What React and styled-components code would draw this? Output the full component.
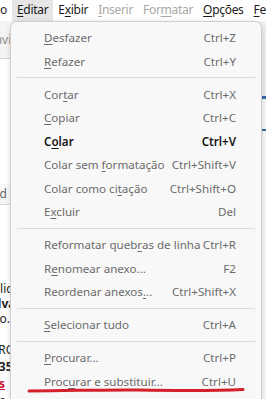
import React from 'react';
import styled, {createGlobalStyle} from 'styled-components';

const Global = createGlobalStyle`
  html, body { margin: 0; padding: 0; background: #fff; }
  body { width: 266px; height: 399px; overflow: hidden; font-family: "Noto Sans", "Open Sans", sans-serif; }
`;

const Screen = styled.div`
  position: relative;
  width: 266px;
  height: 399px;
  overflow: hidden;
  background: #fff;
`;

const MenuBar = styled.div`
  display: flex;
  align-items: center;
  height: 21px;
  background: #fff;
  font-size: 12px;
  letter-spacing: -0.3px;
  color: #1b1b1b;
  white-space: nowrap;
  margin-left: -5px;
  overflow: hidden;
`;

const BarItem = styled.div`
  flex: none;
  padding: 0 5px;
  height: 21px;
  line-height: 20px;
  color: ${p => (p.disabled ? '#a8a8a8' : '#1b1b1b')};
  background: ${p => (p.active ? '#e6e6e6' : 'transparent')};
`;

const Key = styled.span`
  text-decoration: underline;
  text-underline-offset: 2px;
  text-decoration-thickness: 1px;
`;

const Toolbar = styled.div`
  height: 37px;
  background: #f4f4f4;
  border-bottom: 1px solid #d4d4d4;
  display: flex;
  align-items: center;
  font-size: 12px;
  color: #8a8a8a;
  margin-left: -12px;
`;

const Doc = styled.div`
  display: flex;
  flex-direction: column;
  font-size: 12px;
  color: #222;
  white-space: nowrap;
`;

const DocLine = styled.div`
  height: ${p => p.h || 16}px;
  line-height: ${p => p.h || 16}px;
  margin-left: ${p => p.shift || 0}px;
  font-weight: ${p => (p.bold ? 700 : 400)};
  color: ${p => p.color || '#222'};
  text-decoration: ${p => (p.under ? 'underline' : 'none')};
  border-bottom: ${p => (p.rule ? '1px solid #d8d8d8' : 'none')};
  background: ${p => p.bg || 'transparent'};
  overflow: hidden;
`;

const Panel = styled.div`
  position: absolute;
  left: 10px;
  top: 21px;
  width: 252px;
  height: 400px;
  box-sizing: border-box;
  background: #f8f8f8;
  border: 1px solid #cfcfcf;
  border-top-left-radius: 7px;
  border-top-right-radius: 7px;
  box-shadow: 1px 2px 6px rgba(0, 0, 0, 0.18);
  padding-top: 4px;
  display: flex;
  flex-direction: column;
  font-size: 11.6px;
`;

const Row = styled.div`
  height: 23.5px;
  display: flex;
  align-items: center;
  justify-content: space-between;
  padding: 0 25px 0 33px;
  color: ${p => (p.strong ? '#151515' : '#6b6b6b')};
  font-weight: ${p => (p.strong ? 600 : 400)};
  white-space: nowrap;
`;

const Shortcut = styled.span`
  color: inherit;
`;

const Sep = styled.div`
  height: 9.5px;
  display: flex;
  align-items: center;
  padding: 0 6px;
  &::after {
    content: '';
    flex: 1;
    height: 1px;
    background: #dadada;
  }
`;

const Mark = styled.svg`
  position: absolute;
  left: 0;
  top: 384px;
  width: 266px;
  height: 12px;
`;

const RightStrip = styled.div`
  position: absolute;
  right: 0;
  top: 21px;
  width: 4px;
  height: 378px;
  display: flex;
  flex-direction: column;
`;

const StripBit = styled.div`
  height: ${p => p.h}px;
  background: ${p => p.c};
`;

const L = ({text, k}) => {
  if (k === undefined) return text;
  return (
    <>
      {text.slice(0, k)}
      <Key>{text[k]}</Key>
      {text.slice(k + 1)}
    </>
  );
};

const items = [
  {t: 'Desfazer', k: 0, s: 'Ctrl+Z'},
  {t: 'Refazer', k: 0, s: 'Ctrl+Y'},
  'sep',
  {t: 'Cortar', k: 3, s: 'Ctrl+X'},
  {t: 'Copiar', k: 0, s: 'Ctrl+C'},
  {t: 'Colar', k: 1, s: 'Ctrl+V', strong: true},
  {t: 'Colar sem formatação', k: 10, s: 'Ctrl+Shift+V'},
  {t: 'Colar como citação', k: 13, s: 'Ctrl+Shift+O'},
  {t: 'Excluir', k: 1, s: 'Del'},
  'sep',
  {t: 'Reformatar quebras de linha', k: 15, s: 'Ctrl+R'},
  {t: 'Renomear anexo...', k: 1, s: 'F2'},
  {t: 'Reordenar anexos...', k: 16, s: 'Ctrl+Shift+X'},
  'sep',
  {t: 'Selecionar tudo', k: 0, s: 'Ctrl+A'},
  'sep',
  {t: 'Procurar...', k: 0, s: 'Ctrl+P'},
  {t: 'Procurar e substituir...', k: 4, s: 'Ctrl+U'},
];

export default function App() {
  return (
    <Screen>
      <Global />
      <MenuBar>
        <BarItem>o</BarItem>
        <BarItem active><L text="Editar" k={0} /></BarItem>
        <BarItem><L text="Exibir" k={1} /></BarItem>
        <BarItem disabled><L text="Inserir" k={0} /></BarItem>
        <BarItem disabled><L text="Formatar" k={3} /></BarItem>
        <BarItem><L text="Opções" k={0} /></BarItem>
        <BarItem><L text="Fer" k={0} /></BarItem>
      </MenuBar>
      <Toolbar>Enviar</Toolbar>
      <Doc>
        <DocLine h={125} />
        <DocLine h={20} shift={-8} color="#666" rule bg="#f7f7f7">Kd</DocLine>
        <DocLine h={76} />
        <DocLine h={15} shift={-22}>Publicid</DocLine>
        <DocLine h={15} shift={-16} bold>Salvar</DocLine>
        <DocLine h={15} shift={-22}>texto.</DocLine>
        <DocLine h={16} />
        <DocLine h={16} shift={-9}>PRO</DocLine>
        <DocLine h={17} shift={-8} bold>8356</DocLine>
        <DocLine h={17} shift={-1} bold color="#c8102e" under>s</DocLine>
        <DocLine h={17} shift={-1} bold>e</DocLine>
      </Doc>
      <RightStrip>
        <StripBit h={75} c="#f4f4f4" />
        <StripBit h={3} c="#3a6fb0" />
        <StripBit h={30} c="#fff" />
        <StripBit h={2} c="#3a6fb0" />
        <StripBit h={268} c="#fff" />
      </RightStrip>
      <Panel>
        {items.map((it, i) =>
          it === 'sep' ? (
            <Sep key={i} />
          ) : (
            <Row key={i} strong={it.strong}>
              <span><L text={it.t} k={it.k} /></span>
              <Shortcut>{it.s}</Shortcut>
            </Row>
          )
        )}
      </Panel>
      <Mark viewBox="0 0 266 12">
        <path d="M29 7 C 80 6.5, 120 5.5, 137 6 C 170 6.5, 210 7, 243 5.5" stroke="#d3202b" strokeWidth="3" fill="none" strokeLinecap="round" />
      </Mark>
    </Screen>
  );
}
